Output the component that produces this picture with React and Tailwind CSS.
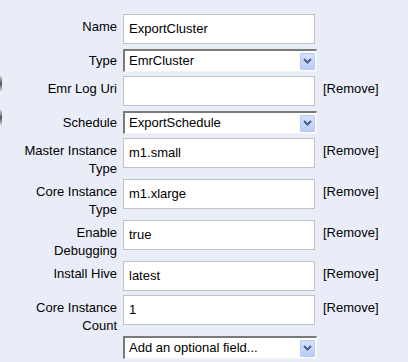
import React from "react";

const font = { fontFamily: '"Liberation Sans", Arial, sans-serif' };

function Chevron() {
  return (
    <svg width="9" height="6" viewBox="0 0 9 6">
      <path d="M1 1 L4.5 4.5 L8 1" fill="none" stroke="#4a5d86" strokeWidth="2" />
    </svg>
  );
}

function Select({ value }) {
  return (
    <div className="flex h-[23px] w-[194px] items-center border-t-2 border-l-2 border-r border-b border-t-[#7a7a7a] border-l-[#7a7a7a] border-r-[#f3f3f3] border-b-[#f3f3f3] bg-white">
      <span className="flex-1 pl-[4px] text-[13px] leading-[18px] text-black">{value}</span>
      <div className="mr-[1px] flex h-[17px] w-[15px] items-center justify-center rounded-[1px] border border-[#b8c9f0] bg-gradient-to-b from-[#d6e2fd] to-[#b9cdf8]">
        <Chevron />
      </div>
    </div>
  );
}

function Input({ value }) {
  return (
    <div className="flex h-[30px] w-[192px] items-center border border-[#c2c2c2] bg-white pl-[5px] text-[13px] text-black">
      {value}
    </div>
  );
}

function Row({ h, label, children, remove, pt = "pt-[4px]" }) {
  return (
    <div className={`flex ${h}`}>
      <div className={`w-[117px] text-right text-[13px] leading-[17.5px] text-black ${pt}`}>
        {label.map((l, i) => (
          <div key={i}>{l}</div>
        ))}
      </div>
      <div className="ml-[6px]">{children}</div>
      {remove && (
        <div className="ml-[8px] pt-[4px] text-[13px] leading-[17.5px] text-black">[Remove]</div>
      )}
    </div>
  );
}

export default function App() {
  return (
    <div className="relative h-[362px] w-[408px] overflow-hidden bg-[#e9edf8] pt-[14px]" style={font}>
      <div className="absolute left-0 top-[74px] h-[19px] w-[2px] bg-gradient-to-b from-white via-[#555] to-white" />
      <div className="absolute left-0 top-[108px] h-[19px] w-[2px] bg-gradient-to-b from-white via-[#555] to-white" />

      <Row h="h-[35px]" label={["Name"]}>
        <Input value="ExportCluster" />
      </Row>
      <Row h="h-[27px]" label={["Type"]} pt="pt-[3px]">
        <Select value="EmrCluster" />
      </Row>
      <Row h="h-[35px]" label={["Emr Log Uri"]} remove>
        <Input value="" />
      </Row>
      <Row h="h-[27px]" label={["Schedule"]} pt="pt-[3px]">
        <Select value="ExportSchedule" />
      </Row>
      <Row h="h-[41px]" label={["Master Instance", "Type"]} remove>
        <Input value="m1.small" />
      </Row>
      <Row h="h-[41px]" label={["Core Instance", "Type"]} remove>
        <Input value="m1.xlarge" />
      </Row>
      <Row h="h-[41px]" label={["Enable", "Debugging"]} remove>
        <Input value="true" />
      </Row>
      <Row h="h-[34px]" label={["Install Hive"]} remove>
        <Input value="latest" />
      </Row>
      <Row h="h-[41px]" label={["Core Instance", "Count"]} remove>
        <Input value="1" />
      </Row>
      <Row h="h-[27px]" label={[""]}>
        <Select value="Add an optional field..." />
      </Row>
    </div>
  );
}
